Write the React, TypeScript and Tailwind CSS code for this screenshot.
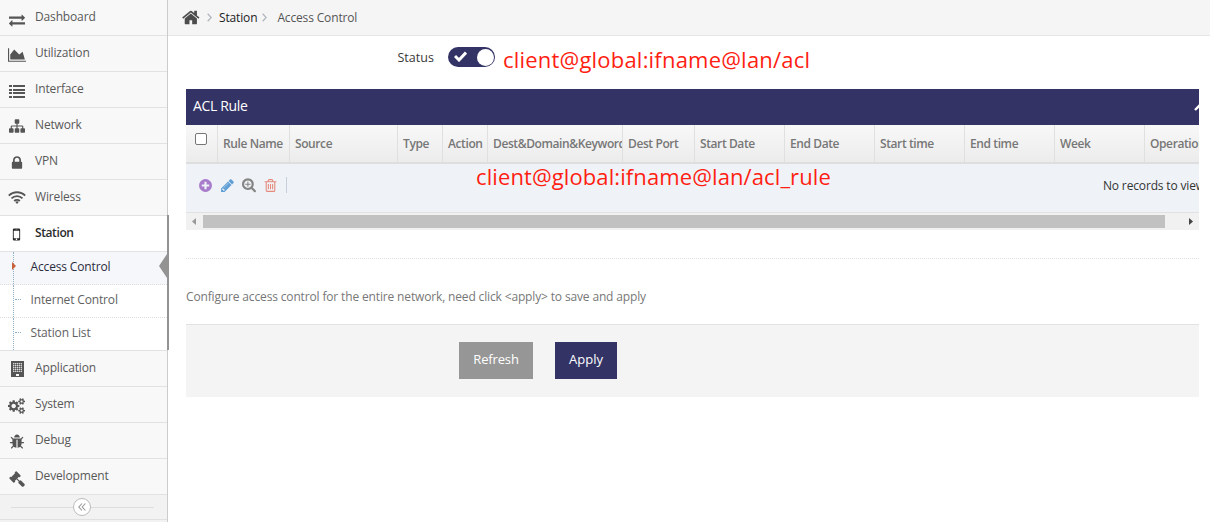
import type { ReactNode } from "react";

type GlyphProps = { d: string; box?: string; className?: string };

function Glyph({ d, box = "0 0 1792 1792", className = "size-4" }: GlyphProps) {
  return (
    <svg viewBox={box} fill="currentColor" className={className} aria-hidden="true">
      <path d={d} />
    </svg>
  );
}

const paths = {
  home: "M1408 992v480q0 26-19 45t-45 19h-384v-384h-256v384h-384q-26 0-45-19t-19-45v-480q0-1 .5-3t.5-3l575-474 575 474q1 2 1 6zm223-69l-62 74q-8 9-21 11h-3q-13 0-21-7l-692-577-692 577q-12 8-24 7-13-2-21-11l-62-74q-8-10-7-23.5t11-21.5l719-599q32-26 76-26t76 26l244 204v-195q0-14 9-23t23-9h192q14 0 23 9t9 23v408l219 182q10 8 11 21.5t-7 23.5z",
  exchange:
    "M1792 1184v192q0 13-9.5 22.5t-22.5 9.5h-1376v192q0 13-9.5 22.5t-22.5 9.5q-12 0-24-10l-319-320q-9-9-9-22 0-14 9-23l320-320q9-9 23-9 13 0 22.5 9.5t9.5 22.5v192h1376q13 0 22.5 9.5t9.5 22.5zm0-544q0 14-9 23l-320 320q-9 9-23 9-13 0-22.5-9.5t-9.5-22.5v-192h-1376q-13 0-22.5-9.5t-9.5-22.5v-192q0-13 9.5-22.5t22.5-9.5h1376v-192q0-14 9-23t23-9q12 0 24 10l319 319q9 9 9 23z",
  area: "M2048 1536v128h-2048v-1536h128v1408h1920zm-384-1024l256 896h-1664v-576l448-576 576 576z",
  sitemap:
    "M1792 1248v320q0 40-28 68t-68 28h-320q-40 0-68-28t-28-68v-320q0-40 28-68t68-28h96v-192h-512v192h96q40 0 68 28t28 68v320q0 40-28 68t-68 28h-320q-40 0-68-28t-28-68v-320q0-40 28-68t68-28h96v-192h-512v192h96q40 0 68 28t28 68v320q0 40-28 68t-68 28h-320q-40 0-68-28t-28-68v-320q0-40 28-68t68-28h96v-192q0-52 38-90t90-38h512v-192h-96q-40 0-68-28t-28-68v-320q0-40 28-68t68-28h320q40 0 68 28t28 68v320q0 40-28 68t-68 28h-96v192h512q52 0 90 38t38 90v192h96q40 0 68 28t28 68z",
  lock: "M640 768h512v-192q0-106-75-181t-181-75-181 75-75 181v192zm832 96v576q0 40-28 68t-68 28h-960q-40 0-68-28t-28-68v-576q0-40 28-68t68-28h32v-192q0-184 132-316t316-132 316 132 132 316v192h32q40 0 68 28t28 68z",
  cogs: "M896 896q0-106-75-181t-181-75-181 75-75 181 75 181 181 75 181-75 75-181zm768 512q0-52-38-90t-90-38-90 38-38 90q0 53 37.5 90.5t90.5 37.5 90.5-37.5 37.5-90.5zm0-1024q0-52-38-90t-90-38-90 38-38 90q0 53 37.5 90.5t90.5 37.5 90.5-37.5 37.5-90.5zm-384 421v185q0 10-7 19.5t-16 10.5l-155 24q-11 35-32 76 34 48 90 115 7 11 7 20 0 12-7 19-23 30-82.5 89.5t-78.5 59.5q-11 0-21-7l-115-90q-37 19-77 31-11 108-23 155-7 24-30 24h-186q-11 0-20-7.5t-10-17.5l-23-153q-34-10-75-31l-118 89q-7 7-20 7-11 0-21-8-144-133-144-160 0-9 7-19 10-14 41-53t47-61q-23-44-35-82l-152-24q-10-1-17-9.5t-7-19.5v-185q0-10 7-19.5t16-10.5l155-24q11-35 32-76-34-48-90-115-7-11-7-20 0-12 7-20 22-30 82-89t79-59q11 0 21 7l115 90q34-18 77-32 11-108 23-154 7-24 30-24h186q11 0 20 7.5t10 17.5l23 153q34 10 75 31l118-89q8-7 20-7 11 0 21 8 144 133 144 160 0 8-7 19-12 16-42 54t-45 60q23 48 34 82l152 23q10 2 17 10.5t7 19.5zm640 533v140q0 16-149 31-12 27-30 52 51 113 51 138 0 4-4 7-122 71-124 71-8 0-46-47t-52-68q-20 2-30 2t-30-2q-14 21-52 68t-46 47q-2 0-124-71-4-3-4-7 0-25 51-138-18-25-30-52-149-15-149-31v-140q0-16 149-31 13-29 30-52-51-113-51-138 0-4 4-7 4-2 35-20t59-34 30-16q8 0 46 46.5t52 67.5q20-2 30-2t30 2q51-71 92-112l6-2q4 0 124 70 4 3 4 7 0 25-51 138 17 23 30 52 149 15 149 31zm0-1024v140q0 16-149 31-12 27-30 52 51 113 51 138 0 4-4 7-122 71-124 71-8 0-46-47t-52-68q-20 2-30 2t-30-2q-14 21-52 68t-46 47q-2 0-124-71-4-3-4-7 0-25 51-138-18-25-30-52-149-15-149-31v-140q0-16 149-31 13-29 30-52-51-113-51-138 0-4 4-7 4-2 35-20t59-34 30-16q8 0 46 46.5t52 67.5q20-2 30-2t30 2q51-71 92-112l6-2q4 0 124 70 4 3 4 7 0 25-51 138 17 23 30 52 149 15 149 31z",
  bug: "M1696 960q0 26-19 45t-45 19h-224q0 171-67 290l208 209q19 19 19 45t-19 45q-18 19-45 19t-45-19l-198-197q-5 5-15 13t-42 28.5-65 36.5-82 29-97 13v-896h-128v896q-51 0-101.500-13.5t-87-33-66-39-43.500-32.500l-15-14-183 207q-20 21-48 21-24 0-43-16-19-18-20.500-44.500t15.500-46.500l202-227q-58-114-58-274h-224q-26 0-45-19t-19-45 19-45 45-19h224v-294l-173-173q-19-19-19-45t19-45 45-19 45 19l173 173h844l173-173q19-19 45-19t45 19 19 45-19 45l-173 173v294h224q26 0 45 19t19 45zm-480-576h-640q0-133 93.500-226.500t226.500-93.500 226.500 93.500 93.500 226.500z",
  gavel:
    "M1771 1536q0 53-37 90l-107 108q-39 37-91 37-53 0-90-37l-363-364q-38-36-38-90 0-53 43-96l-256-256-126 126q-14 14-34 14t-34-14q2 2 12.500 12t12.500 13 10 11.500 10 13.500 6 13.500 5.500 16.500 1.500 18q0 38-28 68-3 3-16.500 18t-19 20.500-18.500 16.500-22 15.500-22 9-26 4.500q-40 0-68-28l-408-408q-28-28-28-68 0-13 4.500-26t9-22 15.500-22 16.500-18.500 20.500-19 18-16.500q30-28 68-28 10 0 18 1.500t16.500 5.500 13.500 6 13.500 10 11.500 10 13 12.500 12 12.500q-14-14-14-34t14-34l348-348q14-14 34-14t34 14q-2-2-12.500-12t-12.500-13-10-11.500-10-13.500-6-13.500-5.500-16.500-1.500-18q0-38 28-68 3-3 16.500-18t19-20.500 18.500-16.500 22-15.500 22-9 26-4.500q40 0 68 28l408 408q28 28 28 68 0 13-4.500 26t-9 22-15.500 22-16.500 18.500-20.500 19-18 16.500q-30 28-68 28-10 0-18-1.500t-16.500-5.500-13.500-6-13.500-10-11.500-10-13-12.500-12-12.500q14 14 14 34t-14 34l-126 126 256 256q43-43 96-43 52 0 91 37l363 363q37 39 37 91z",
  mobile:
    "M976 1408q0-33-23.5-56.5t-56.5-23.5-56.5 23.5-23.5 56.5 23.5 56.5 56.5 23.5 56.5-23.5 23.5-56.5zm208-160v-704q0-13-9.5-22.5t-22.5-9.5h-512q-13 0-22.5 9.5t-9.5 22.5v704q0 13 9.5 22.5t22.5 9.5h512q13 0 22.5-9.5t9.5-22.5zm-192-848q0-16-16-16h-160q-16 0-16 16t16 16h160q16 0 16-16zm288-16v1024q0 52-38 90t-90 38h-512q-52 0-90-38t-38-90v-1024q0-52 38-90t90-38h512q52 0 90 38t38 90z",
  plusCircle:
    "M1344 960v-128q0-26-19-45t-45-19h-256v-256q0-26-19-45t-45-19h-128q-26 0-45 19t-19 45v256h-256q-26 0-45 19t-19 45v128q0 26 19 45t45 19h256v256q0 26 19 45t45 19h128q26 0 45-19t19-45v-256h256q26 0 45-19t19-45zm320-64q0 209-103 385.5t-279.5 279.5-385.5 103-385.5-103-279.5-279.5-103-385.5 103-385.5 279.5-279.5 385.5-103 385.5 103 279.5 279.5 103 385.5z",
  pencil:
    "M491 1536l91-91-235-235-91 91v107h128v128h107zm523-928q0-22-22-22-10 0-17 7l-542 542q-7 7-7 17 0 22 22 22 10 0 17-7l542-542q7-7 7-17zm-54-192l416 416-832 832h-416v-416zm683 96q0 53-37 90l-166 166-416-416 166-165q36-38 90-38 53 0 91 38l235 234q37 39 37 91z",
  searchPlus:
    "M1024 704v64q0 13-9.5 22.5t-22.5 9.5h-224v224q0 13-9.5 22.5t-22.5 9.5h-64q-13 0-22.5-9.5t-9.5-22.5v-224h-224q-13 0-22.5-9.5t-9.5-22.5v-64q0-13 9.5-22.5t22.5-9.5h224v-224q0-13 9.5-22.5t22.5-9.5h64q13 0 22.5 9.5t9.5 22.5v224h224q13 0 22.5 9.5t9.5 22.5zm128 32q0-185-131.5-316.5t-316.5-131.5-316.5 131.5-131.5 316.5 131.5 316.5 316.5 131.5 316.5-131.5 131.5-316.5zm512 832q0 53-37.5 90.5t-90.5 37.5q-54 0-90-38l-343-342q-179 124-399 124-143 0-273.5-55.5t-225-150-150-225-55.5-273.5 55.5-273.5 150-225 225-150 273.5-55.5 273.5 55.5 225 150 150 225 55.5 273.5q0 220-124 399l343 343q37 37 37 90z",
  trash:
    "M704 736v576q0 14-9 23t-23 9h-64q-14 0-23-9t-9-23v-576q0-14 9-23t23-9h64q14 0 23 9t9 23zm256 0v576q0 14-9 23t-23 9h-64q-14 0-23-9t-9-23v-576q0-14 9-23t23-9h64q14 0 23 9t9 23zm256 0v576q0 14-9 23t-23 9h-64q-14 0-23-9t-9-23v-576q0-14 9-23t23-9h64q14 0 23 9t9 23zm128 724v-948h-896v948q0 22 7 40.5t14.5 27 10.5 8.5h832q3 0 10.5-8.5t14.5-27 7-40.5zm-672-1076h448l-48-117q-7-9-17-11h-317q-10 2-17 11zm928 32v64q0 14-9 23t-23 9h-96v948q0 83-47 143.5t-113 60.5h-832q-66 0-113-58.5t-47-141.5v-952h-96q-14 0-23-9t-9-23v-64q0-14 9-23t23-9h309l70-167q15-37 54-63t79-26h320q40 0 79 26t54 63l70 167h309q14 0 23 9t9 23z",
};

function BuildingIcon() {
  return (
    <svg viewBox="0 0 13 16" className="h-4 w-[13px] translate-x-px -translate-y-px" shapeRendering="crispEdges" aria-hidden="true">
      <path fill="#555" d="M0 0h13v16H0z" />
      <path
        stroke="#d8d8d8"
        strokeDasharray="1 1"
        d="M2 2.5h9M2 4.5h9M2 6.5h9M2 8.5h9M2 10.5h9"
      />
      <path stroke="#8c8c8c" strokeDasharray="1 1" d="M3 2.5h8M3 4.5h8M3 6.5h8M3 8.5h8M3 10.5h8M2 3.5h9M2 5.5h9M2 7.5h9M2 9.5h9" />
      <path fill="#f8f8f8" d="M5 13h3v2H5z" />
    </svg>
  );
}

function ListIcon() {
  return (
    <svg viewBox="0 0 16 13" className="h-[13px] w-4 translate-y-px" fill="#555" shapeRendering="crispEdges" aria-hidden="true">
      <path d="M0 0h3v2H0zM4 0h12v2H4zM0 4h3v2H0zM4 4h12v2H4zM0 7h3v2H0zM4 7h12v2H4zM0 11h3v2H0zM4 11h12v2H4z" />
    </svg>
  );
}

function WifiIcon() {
  return (
    <svg viewBox="0 0 18 13" className="h-[13px] w-[18px] shrink-0 -translate-y-px" aria-hidden="true">
      <g fill="none" stroke="#555" strokeWidth="1.9">
        <path d="M.8 4.700a11.600 11.600 0 0 1 16.400 0" />
        <path d="M3.500 7.400a7.800 7.800 0 0 1 11 0" />
        <path d="M6.200 10a4 4 0 0 1 5.600 0" />
      </g>
      <path d="M7.300 11.100a2.400 2.400 0 0 1 3.400 0L9 12.900z" fill="#555" />
    </svg>
  );
}

type Entry = { label: string; icon: ReactNode };

const upper: Entry[] = [
  { label: "Dashboard", icon: <Glyph d={paths.exchange} className="size-4 translate-y-px" /> },
  { label: "Utilization", icon: <Glyph d={paths.area} box="0 0 2048 1792" className="h-4 w-[18px] shrink-0" /> },
  { label: "Interface", icon: <ListIcon /> },
  { label: "Network", icon: <Glyph d={paths.sitemap} className="size-4 -translate-y-px" /> },
  { label: "VPN", icon: <Glyph d={paths.lock} className="size-4" /> },
  { label: "Wireless", icon: <WifiIcon /> },
];

const lower: Entry[] = [
  { label: "Application", icon: <BuildingIcon /> },
  { label: "System", icon: <Glyph d={paths.cogs} box="0 0 1920 1792" className="h-4 w-[17px] shrink-0" /> },
  { label: "Debug", icon: <Glyph d={paths.bug} className="size-4" /> },
  { label: "Development", icon: <Glyph d={paths.gavel} className="size-4 translate-y-px" /> },
];

const columns = [
  { label: "Rule Name", width: "w-[72px]" },
  { label: "Source", width: "w-[108px]" },
  { label: "Type", width: "w-[45px]" },
  { label: "Action", width: "w-[45px]" },
  { label: "Dest&Domain&Keyword", width: "w-[135px]" },
  { label: "Dest Port", width: "w-[72px]" },
  { label: "Start Date", width: "w-[90px]" },
  { label: "End Date", width: "w-[90px]" },
  { label: "Start time", width: "w-[90px]" },
  { label: "End time", width: "w-[90px]" },
  { label: "Week", width: "w-[90px]" },
  { label: "Operation", width: "w-[90px]" },
];

function MenuItem({ label, icon }: Entry) {
  return (
    <li className="flex h-9 items-center border-b border-[#e2e2e2] bg-[#f8f8f8] text-[#585858]">
      <span className="ml-2 flex w-[17px] justify-center pt-0.5 text-[#555]">{icon}</span>
      <span className="ml-[10px] pb-px">{label}</span>
    </li>
  );
}

function SubItem({ label, active, last }: { label: string; active?: boolean; last?: boolean }) {
  return (
    <li
      className={`relative flex h-[33px] items-center pl-[30.5px] ${active ? "bg-[#f5f7fa] text-[#2b2b3d]" : "bg-white text-[#616161]"} ${last ? "border-b border-[#e2e2e2]" : "border-b border-dotted border-[#dcdcdc]"}`}
    >
      <span className={active ? "pb-0.5" : "pb-[3px]"}>{label}</span>
      <span className="absolute inset-y-0 left-[13px] border-l border-dotted border-[#8fb0c9]" />
      {active ? (
        <>
          <svg viewBox="0 0 4 8" className="absolute left-3 top-[10px] h-2 w-1">
            <path d="M0 0l4 4-4 4z" fill="#c86139" />
          </svg>
          <svg viewBox="0 0 8 24" className="absolute right-0 top-0.5 h-6 w-2">
            <path d="M8 0v24L0 12z" fill="#939393" />
          </svg>
        </>
      ) : (
        <span className="absolute left-[15px] top-[14px] w-[6px] border-t border-dotted border-[#8fb0c9]" />
      )}
    </li>
  );
}

function Sidebar() {
  return (
    <aside className="flex w-[168px] shrink-0 flex-col border-r border-[#ccc] bg-[#f2f2f2]">
      <ul>
        {upper.map((e) => (
          <MenuItem key={e.label} {...e} />
        ))}
        <li className="relative">
          <div className="flex h-9 items-center border-b border-[#e2e2e2] bg-white text-[#2b2b2b]">
            <span className="ml-2 flex w-[17px] justify-center pt-0.5">
              <Glyph d={paths.mobile} className="size-[17px] shrink-0" />
            </span>
            <span className="ml-[10px] pb-px font-semibold tracking-[-0.4px]">Station</span>
          </div>
          <ul>
            <SubItem label="Access Control" active />
            <SubItem label="Internet Control" />
            <SubItem label="Station List" last />
          </ul>
          <span className="absolute -right-[2px] -top-px bottom-px w-[2px] bg-[#939393]" />
        </li>
        {lower.map((e) => (
          <MenuItem key={e.label} {...e} />
        ))}
      </ul>
      <div className="flex h-[25px] items-center border-b border-[#e0e0e0] pl-[11px] pr-[13px]">
        <span className="h-px w-[62px] bg-[#ddd]" />
        <span className="flex size-[18px] items-center justify-center rounded-full border border-[#bbb] bg-white text-[#999]">
          <svg viewBox="0 0 8 8" className="size-2" fill="none" stroke="currentColor" strokeWidth="1.1">
            <path d="M4 .5L.8 4 4 7.500M7.400.5L4.200 4l3.200 3.500" />
          </svg>
        </span>
        <span className="h-px flex-1 bg-[#ddd]" />
      </div>
    </aside>
  );
}

function Crumb() {
  return (
    <svg viewBox="0 0 5 9" className="h-[9px] w-[5px] shrink-0" fill="none" stroke="#b2b6bf" strokeWidth="1.3">
      <path d="M.7.700L4.200 4.500.7 8.300" />
    </svg>
  );
}

function Breadcrumbs() {
  return (
    <nav className="flex h-9 items-center border-b border-[#e5e5e5] bg-[#f5f5f5] pl-[14px]">
      <Glyph d={paths.home} className="size-[19px] text-[#4c4c4c]" />
      <span className="ml-[6px] flex">
        <Crumb />
      </span>
      <span className="ml-[7px] text-[#222]">Station</span>
      <span className="ml-[5px] flex">
        <Crumb />
      </span>
      <span className="ml-[10px] text-[#555]">Access Control</span>
    </nav>
  );
}

export default function App() {
  return (
    <div className="flex h-[522px] w-[1210px] overflow-hidden bg-white font-['Open_Sans',sans-serif] text-[12px] leading-[18px] tracking-[-0.15px]">
      <Sidebar />
      <main className="min-w-0 flex-1">
        <Breadcrumbs />
        <div className="flex h-[53px] items-start">
          <span className="ml-[229.5px] mt-[13px] w-[50.5px] text-[12.5px] tracking-normal text-[#393939]">Status</span>
          <span className="mt-[11px] flex h-5 w-[47px] items-center justify-between rounded-full bg-[#333366] pl-[6px] pr-px">
            <svg viewBox="0 0 13 11" className="h-[11px] w-[13px] -translate-y-px" fill="none" stroke="#fff" strokeWidth="3">
              <path d="M1 5l4 4 7-7.500" />
            </svg>
            <span className="size-[17px] rounded-full bg-white" />
          </span>
          <span className="ml-2 mt-[8px] whitespace-nowrap text-[22px] leading-[30px] tracking-[0.2px] text-[#ff1e12]">
            client@global:ifname@lan/acl
          </span>
        </div>

        <section className="ml-[18px] w-[1013px] overflow-hidden">
          <header className="flex h-9 items-center bg-[#333366] pl-[7px] text-[14px] tracking-[-0.35px] text-white">
            <h2 className="pb-0.5">ACL Rule</h2>
            <svg viewBox="0 0 12 8" className="-mr-[7px] ml-auto h-2 w-3 shrink-0" fill="none" stroke="#fff" strokeWidth="2.400">
              <path d="M1 7l5-5 5 5" />
            </svg>
          </header>
          <div className="flex h-[39px] w-[1053px] border-b-2 border-[#dedede] bg-linear-to-b from-[#f8f8f8] to-[#ececec] font-semibold text-[#777]">
            <div className="flex w-8 shrink-0 justify-center border-r border-[#e0e0e0] pr-0.5 pt-2">
              <span className="size-3 rounded-[2px] border border-[#767676] bg-white" />
            </div>
            {columns.map((c) => (
              <div
                key={c.label}
                className={`shrink-0 overflow-hidden whitespace-nowrap border-r border-[#e0e0e0] pl-[5px] pt-[10px] tracking-[-0.4px] ${c.width}`}
              >
                {c.label}
              </div>
            ))}
          </div>
          <div className="relative flex h-[49px] w-[1053px] items-start border-b border-[#e1e1e1] bg-[#eff3f8]">
            <div className="flex items-center pl-3 pt-[13px]">
              <Glyph d={paths.plusCircle} className="size-[15px] text-[#a87ccb]" />
              <Glyph d={paths.pencil} className="ml-[7px] size-[15px] text-[#5f9fd6]" />
              <Glyph d={paths.searchPlus} className="ml-[7px] size-[15px] text-[#858585]" />
              <Glyph d={paths.trash} className="ml-[6px] size-[15px] text-[#e58a7c]" />
              <span className="ml-[8px] h-4 w-px bg-[#c5d0dc]" />
            </div>
            <span className="absolute left-[290px] -top-[2px] whitespace-nowrap text-[22px] leading-[28px] tracking-[0.1px] text-[#ff1e12]">
              client@global:ifname@lan/acl_rule
            </span>
            <span className="ml-auto mr-[34px] mt-[13px] whitespace-nowrap text-[#333]">No records to view</span>
          </div>
          <div className="flex h-[17px] items-center bg-[#f1f1f1]">
            <svg viewBox="0 0 4 7" className="ml-[6px] h-[7px] w-1">
              <path d="M4 0v7L0 3.500z" fill="#999" />
            </svg>
            <span className="ml-[7px] h-[13px] w-[962px] bg-[#c1c1c1]" />
            <svg viewBox="0 0 4 7" className="ml-6 h-[7px] w-1">
              <path d="M0 0v7l4-3.500z" fill="#444" />
            </svg>
          </div>
        </section>

        <section className="ml-[18px] mt-7 w-[1013px] border-t border-dotted border-[#e0e0e0]">
          <p className="pt-[29px] text-[#777]">
            Configure access control for the entire network, need click &lt;apply&gt; to save and apply
          </p>
          <footer className="mt-[18px] flex h-[73px] items-start gap-[22px] border-t border-[#e2e2e2] bg-[#f4f4f4] pl-[273px] pt-[17px] text-[13px] text-white [text-shadow:0_-1px_0_rgba(0,0,0,0.25)]">
            <button className="h-[37px] w-[74px] bg-[#969696] pb-[3px]">Refresh</button>
            <button className="h-[37px] w-[62px] bg-[#333366] pb-[3px] tracking-normal">Apply</button>
          </footer>
        </section>
      </main>
    </div>
  );
}
